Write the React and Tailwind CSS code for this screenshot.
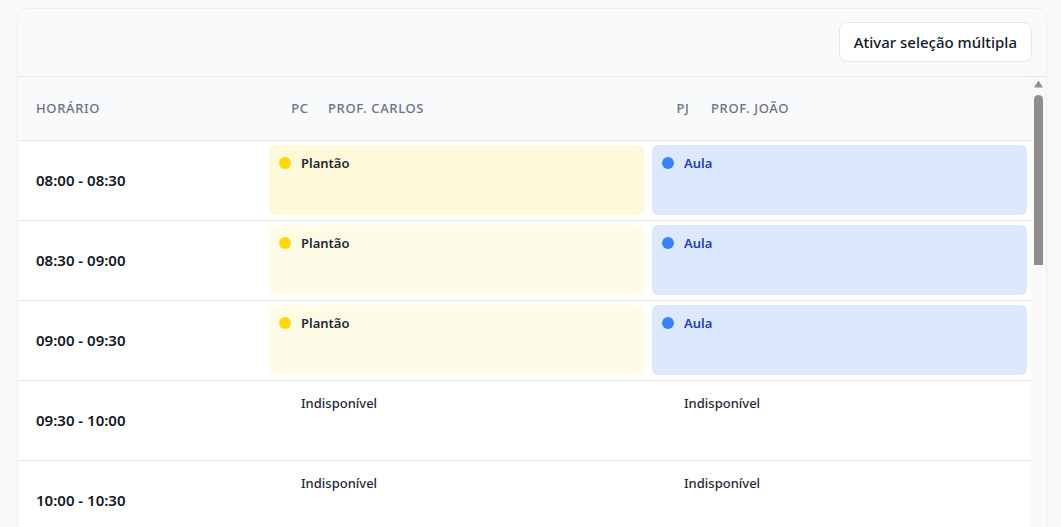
import React from "react";

const rows = [
  { time: "08:00 - 08:30", a: "plantao", b: "aula" },
  { time: "08:30 - 09:00", a: "plantao", b: "aula" },
  { time: "09:00 - 09:30", a: "plantao", b: "aula" },
  { time: "09:30 - 10:00", a: "none", b: "none" },
  { time: "10:00 - 10:30", a: "none", b: "none" },
  { time: "10:30 - 11:00", a: "none", b: "none" },
  { time: "11:00 - 11:30", a: "none", b: "none" },
];

function Cell({ kind, first }) {
  if (kind === "plantao") {
    return (
      <div className="p-1">
        <div className={`h-[70px] rounded-md px-2.5 pt-2 flex items-start gap-2.5 ${first ? "bg-[#fef9d8]" : "bg-[#fefce6]"}`}>
          <span className="mt-1 w-3 h-3 rounded-full bg-[#fdd807] shrink-0" />
          <span className="text-[13px] leading-5 font-semibold text-[#1f2937]">Plantão</span>
        </div>
      </div>
    );
  }
  if (kind === "aula") {
    return (
      <div className="p-1">
        <div className="h-[70px] rounded-md px-2.5 pt-2 flex items-start gap-2.5 bg-[#dbe8fe]">
          <span className="mt-1 w-3 h-3 rounded-full bg-[#3b82f6] shrink-0" />
          <span className="text-[13px] leading-5 font-semibold text-[#1e40af]">Aula</span>
        </div>
      </div>
    );
  }
  return (
    <div className="p-1">
      <div className="h-[70px] px-2.5 pt-2 flex items-start gap-2.5">
        <span className="mt-1 w-3 h-3 shrink-0" />
        <span className="text-[13px] leading-5 font-medium text-[#1f2937]">Indisponível</span>
      </div>
    </div>
  );
}

export default function App() {
  return (
    <div
      className="min-h-screen bg-[#f8f9fb] pl-[17px] pr-[14px] pt-2"
      style={{ fontFamily: '"Noto Sans", "Open Sans", sans-serif' }}
    >
      <div className="rounded-xl border border-[#eceef1] bg-[#f9fafb] overflow-hidden">
        <div className="flex justify-end px-3.5 pt-[13px] pb-[14px] border-b border-[#e5e7eb]">
          <button className="h-[40px] px-[14px] rounded-lg border border-[#e5e7eb] bg-white text-[15px] font-medium text-[#111827]">
            Ativar seleção múltipla
          </button>
        </div>
        <div className="h-[460px] flex">
          <div className="flex-1 overflow-hidden">
            <div className="grid grid-cols-[247px_1fr_1fr] h-[64px] items-center bg-[#f9fafb] border-b border-[#e5e7eb] text-[13px] font-medium text-[#6b7280] tracking-[0.05em]">
              <div className="pl-[18px]">HORÁRIO</div>
              <div className="flex items-center pl-[19px]">
                <span className="w-8 text-center">PC</span>
                <span className="ml-[12px]">PROF. CARLOS</span>
              </div>
              <div className="flex items-center pl-[19px]">
                <span className="w-8 text-center">PJ</span>
                <span className="ml-[12px]">PROF. JOÃO</span>
              </div>
            </div>
            {rows.map((r, i) => (
              <div key={r.time} className="grid grid-cols-[247px_1fr_1fr] h-[80px] bg-white border-b border-[#e5e7eb]">
                <div className="flex items-center pl-[18px] text-[15px] font-semibold text-[#111827]">{r.time}</div>
                <Cell kind={r.a} first={i === 0} />
                <Cell kind={r.b} first={i === 0} />
              </div>
            ))}
          </div>
          <div className="w-[15px] shrink-0 bg-[#f9f9fa] flex flex-col items-center">
            <svg width="15" height="15" viewBox="0 0 15 15" className="shrink-0 block">
              <path d="M7.5 3.5 L12 10.5 L3 10.5 Z" fill="#8f8f8f" />
            </svg>
            <div className="mt-[3px] w-[9px] h-[170px] rounded-t-full bg-[#8d8d8d]" />
          </div>
        </div>
      </div>
    </div>
  );
}
